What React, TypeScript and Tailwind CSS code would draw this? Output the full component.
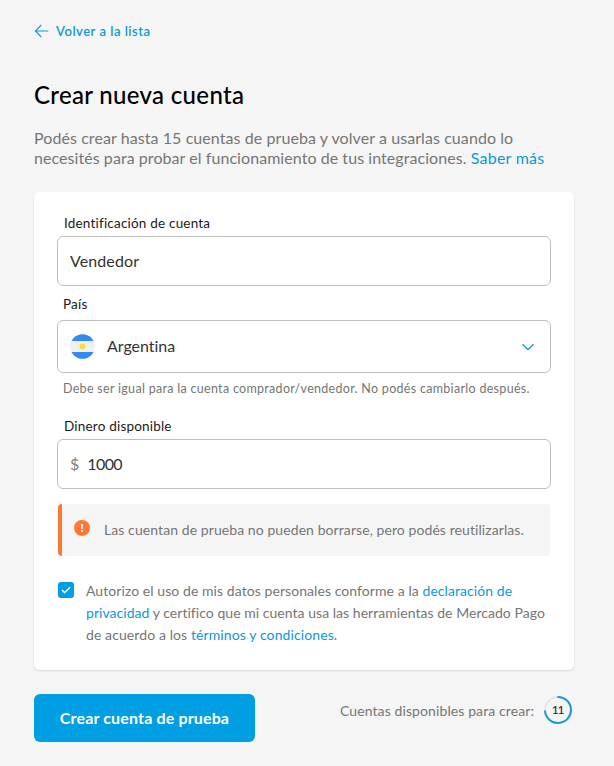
import type { ReactNode } from "react";

function Label({ children, className }: { children: ReactNode; className: string }) {
  return (
    <label className={`block h-4 text-[13.5px] leading-4 tracking-[0.2px] whitespace-nowrap text-[#1a1a1a] ${className}`}>
      {children}
    </label>
  );
}

function Flag() {
  return (
    <svg width="25" height="25" viewBox="0 0 25 25" className="shrink-0">
      <defs>
        <clipPath id="disc">
          <circle cx="12.5" cy="12.5" r="12.3" />
        </clipPath>
      </defs>
      <g clipPath="url(#disc)">
        <rect width="25" height="25" fill="#f0f0f0" />
        <rect width="25" height="7" fill="#338af3" />
        <rect y="18" width="25" height="7" fill="#338af3" />
      </g>
      <circle cx="12.5" cy="12.5" r="2.9" fill="#ffda44" />
    </svg>
  );
}

function Warning() {
  return (
    <svg width="16" height="16" viewBox="0 0 16 16" className="shrink-0">
      <circle cx="8" cy="8" r="8" fill="#ff7733" />
      <path d="M6.900 4h2.200l-.4 5H7.300z" fill="#fff" />
      <circle cx="8" cy="11" r="1.100" fill="#fff" />
    </svg>
  );
}

function Ring() {
  return (
    <div className="grid size-7 shrink-0 place-items-center">
      <svg width="28" height="28" viewBox="0 0 28 28" className="col-start-1 row-start-1">
        <circle cx="14" cy="14" r="13" fill="none" stroke="#e3e3e3" strokeWidth="1.6" />
        <circle
          cx="14"
          cy="14"
          r="13"
          fill="none"
          stroke="#1b9bd8"
          strokeWidth="2"
          pathLength="15"
          strokeDasharray="11.3 3.7"
          transform="rotate(-93 14 14)"
        />
      </svg>
      <span className="col-start-1 row-start-1 pr-px text-[12px] leading-4 tracking-[-1.3px] text-[#1a1a1a]">11</span>
    </div>
  );
}

const link = "text-[#0d98da]";

export default function App() {
  return (
    <main className="h-[766px] w-[614px] overflow-hidden bg-[#f5f5f5] pt-[23px] pr-10 pl-[34px] font-['Lato',sans-serif] text-[#757575]">
      <a className={`flex h-4 items-center gap-[7px] text-[13px] leading-4 font-semibold ${link}`}>
        <svg width="15" height="14" viewBox="0 0 15 14" fill="none" stroke="#1b9bd8" strokeWidth="1.2">
          <path d="M14.300 7H1.600M7.200 1 1.400 7l5.800 6" />
        </svg>
        <span className="tracking-[0.52px]">Volver a la lista</span>
      </a>
      <h1 className="mt-10 h-8 text-[24px] leading-8 font-medium tracking-[0.33px] whitespace-nowrap text-black">
        Crear nueva cuenta
      </h1>
      <p className="mt-[17px] text-[16px] leading-5 whitespace-nowrap">
        <span className="tracking-[0.075px]">Podés crear hasta 15 cuentas de prueba y volver a usarlas cuando lo</span>
        <br />
        <span className="tracking-[0.06px]">
          necesités para probar el funcionamiento de tus integraciones.{" "}
          <a className={`tracking-[0.25px] ${link}`}>Saber más</a>
        </span>
      </p>

      <section className="mt-6 h-[478px] w-[540px] rounded-md bg-white pt-[23px] pr-[23px] pl-[23px] shadow-[0_1px_2px_rgba(0,0,0,0.12)]">
        <Label className="pl-[7px]">Identificación de cuenta</Label>
        <div className="mt-[5px] flex h-[50px] w-[494px] items-center rounded-md border border-[#bfbfbf] pb-px pl-3 text-[16px] text-[#333]">
          <span className="tracking-[0.1px]">Vendedor</span>
        </div>
        <Label className="mt-[10px] pl-[6px]">País</Label>
        <div className="mt-2 flex h-[53px] w-[494px] items-center rounded-md border border-[#bfbfbf] pr-4 pl-3 text-[16px] text-[#333]">
          <Flag />
          <span className="ml-3 pb-px tracking-[-0.02px]">Argentina</span>
          <svg width="12" height="8" viewBox="0 0 12 8" fill="none" stroke="#1b9bd8" strokeWidth="1.4" className="ml-auto">
            <path d="M.5 1.300 6 6.500l5.500-5.200" />
          </svg>
        </div>
        <p className="mt-2 pl-[6px] text-[12.5px] leading-4 tracking-[0.3px] whitespace-nowrap">
          Debe ser igual para la cuenta comprador/vendedor. No podés cambiarlo después.
        </p>
        <Label className="mt-[21px] pl-[7px]">Dinero disponible</Label>
        <div className="mt-[5px] flex h-[50px] w-[494px] items-center gap-2 rounded-md border border-[#bfbfbf] pb-px pl-3 text-[16px] text-[#333]">
          <span className="pt-px text-[#808080]">$</span>
          <span className="tracking-[-0.6px]">1000</span>
        </div>
        <div className="mt-[15px] ml-px flex h-[52px] w-[492px] rounded-[4px] border-l-4 border-[#ff7733] bg-[#f5f5f5] pt-4 pl-3">
          <Warning />
          <p className="mt-[2px] ml-[14px] text-[14px] leading-4 tracking-[0.08px] whitespace-nowrap">
            Las cuentan de prueba no pueden borrarse, pero podés reutilizarlas.
          </p>
        </div>
        <div className="mt-6 ml-px flex">
          <span className="mt-[2px] flex size-4 shrink-0 items-center justify-center rounded-[3px] bg-[#009ee3]">
            <svg width="10" height="8" viewBox="0 0 10 8" fill="none" stroke="#fff" strokeWidth="1.500">
              <path d="m1 4 2.700 2.600L9 1.200" />
            </svg>
          </span>
          <p className="ml-3 text-[14px] leading-[22px] whitespace-nowrap">
            <span className="tracking-[0.07px]">
              Autorizo el uso de mis datos personales conforme a la <a className={link}>declaración de</a>
            </span>
            <br />
            <span className="tracking-[0.04px]">
              <a className={link}>privacidad</a> y certifico que mi cuenta usa las herramientas de Mercado Pago
            </span>
            <br />
            <span className="tracking-[0.1px]">
              de acuerdo a los <a className={link}>términos y condiciones</a>.
            </span>
          </p>
        </div>
      </section>

      <footer className="mt-6 flex w-[540px] items-start justify-between">
        <button className="h-12 w-[221px] rounded-md bg-[#009ee3] pb-px text-[16px] font-bold tracking-[0.15px] whitespace-nowrap text-white">
          Crear cuenta de prueba
        </button>
        <div className="mt-[2px] mr-[2px] flex items-center gap-[10px] text-[14px]">
          <span className="tracking-[0.1px]">Cuentas disponibles para crear:</span>
          <Ring />
        </div>
      </footer>
    </main>
  );
}
